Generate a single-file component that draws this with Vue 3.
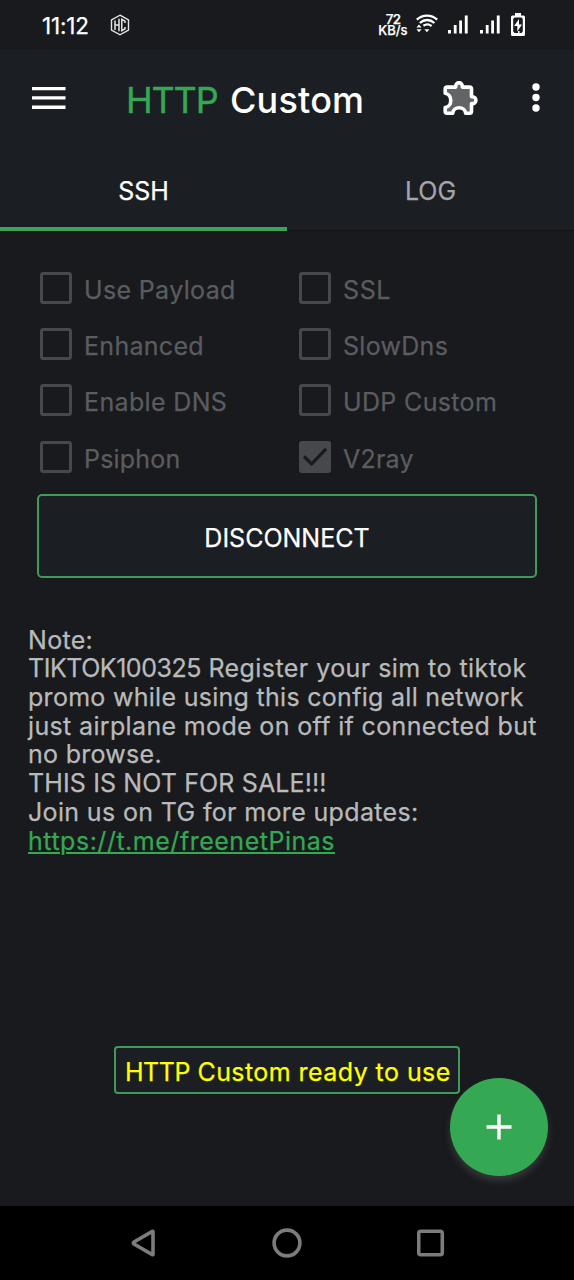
<script setup>
const options = [
  { label: 'Use Payload', checked: false, fit: 'wide' },
  { label: 'SSL', checked: false, fit: 'widest' },
  { label: 'Enhanced', checked: false, fit: 'mid' },
  { label: 'SlowDns', checked: false, fit: 'mid' },
  { label: 'Enable DNS', checked: false, fit: 'wide' },
  { label: 'UDP Custom', checked: false, fit: 'wide' },
  { label: 'Psiphon', checked: false, fit: 'slim' },
  { label: 'V2ray', checked: true, fit: 'slim' },
]
const noteLines = [
  [{ text: 'Note:', fit: 'mid' }],
  [{ text: 'TIKTOK100325', fit: 'tight' }, { text: ' Register your sim to tiktok', fit: 'wider' }],
  [{ text: 'promo while using this config all network', fit: 'mid' }],
  [{ text: 'just airplane mode on off if connected but', fit: 'wide' }],
  [{ text: 'no browse.', fit: 'mid' }],
  [{ text: 'THIS IS NOT FOR SALE!!!', fit: 'caps' }],
  [{ text: 'Join us on TG for more updates:', fit: 'wide' }],
]
</script>

<template>
  <div class="screen">
    <div class="status">
      <span class="clock">11:12</span>
      <svg class="hc" width="20" height="22" viewBox="0 0 20 22" fill="none" stroke="#e4e5e6">
        <path d="M10 1.2 18.5 6v10L10 20.8 1.5 16V6z" stroke-width="1.4" />
        <path d="M5 6.4v9.6M9 4.8v12.4M5 11h4M15 9V7.2l-3.2-1.8v11.2L15 14.8V13" stroke-width="1.5" />
      </svg>
      <div class="speed"><span class="rate">72</span><span>KB/s</span></div>
      <svg class="wifi" width="22" height="20" viewBox="0 0 22 20" fill="none" stroke="#fff" stroke-width="2.3">
        <path d="M.8 5.6C6.8.2 15.2.2 21.200 5.600M3.800 9C8.200 5 14 5 18.400 9M7.400 11.800C10 9.900 13.200 10.100 15.600 12.100" />
        <path d="M8.400 15.200h5L10.900 18.200z" fill="#fff" stroke="none" />
        <path d="M.4 13.600h5.200L3 10.600zM.4 15.200h5.200L3 18.200z" fill="#fff" stroke="none" />
      </svg>
      <svg v-for="n in 2" :key="n" class="signal" width="20" height="19" viewBox="0 0 20 19" fill="#fff">
        <path d="M0 15h3v3.500H0zM5.800 10h2.800v8.500H5.800zM11.200 5.500H14v13h-2.800zM16.800.5h2.900v18h-2.900z" />
      </svg>
      <svg class="battery" width="14" height="23" viewBox="0 0 14 23">
        <path d="M4 0h6v2.500h2.500Q14 2.500 14 4v17.500q0 1.500-1.500 1.500h-11Q0 23 0 21.500V4Q0 2.500 1.500 2.500H4z" fill="#fff" />
        <path d="M2.200 6 3.500 4.500h7L11.800 6v12.500L10.500 20H8.500v-2H7v2H3.500L2.200 18.500z" fill="#181a1d" />
        <path d="M8 6 3.100 13h3.200v5.500L11 11.500H8z" fill="#fff" />
      </svg>
    </div>

    <header class="toolbar">
      <svg class="menu" width="34" height="24" viewBox="0 0 34 24" fill="#fff">
        <path d="M0 1h33.500v3.300H0zM0 10.300h33.500v3.300H0zM0 19.600h33.500v3.300H0z" />
      </svg>
      <h1><span class="http">HTTP</span><span class="custom">Custom</span></h1>
      <svg class="puzzle" width="36" height="36" viewBox="0 0 36 36">
        <path
          d="M4 6.100H12.700V5a3.300 3.300 0 0 1 6.600 0V6.100H26.500Q28.500 6.100 28.500 8.100V15.800H29.500a3.400 3.400 0 0 1 0 6.800H28.500V30.500Q28.500 32.300 26.500 32.300H22.700C22 24.900 10.300 24.900 9.700 32.300H4Q2.200 32.300 2.200 30.300V26.600C9.600 25.500 9.600 13.500 2.200 12.200V8.100Q2.200 6.100 4 6.100Z"
          fill="#626466" stroke="#fff" stroke-width="3.600" stroke-linejoin="round"
        />
        <path d="M16 4.500v5M27 19.200h4" stroke="#626466" stroke-width="2" />
      </svg>
      <svg class="more" width="8" height="30" viewBox="0 0 8 30" fill="#fff">
        <circle cx="4" cy="4" r="3.700" /><circle cx="4" cy="14.500" r="3.700" /><circle cx="4" cy="25" r="3.700" />
      </svg>
    </header>

    <nav class="tabs">
      <div class="tab active"><span>SSH</span></div>
      <div class="tab"><span>LOG</span></div>
    </nav>

    <main>
      <div class="options">
        <div v-for="o in options" :key="o.label" class="option">
          <svg width="32" height="32" viewBox="0 0 32 32">
            <rect v-if="!o.checked" x="1.500" y="1.500" width="29" height="29" rx="1.800" fill="none" stroke="#47484b" stroke-width="3" />
            <template v-else>
              <rect width="32" height="32" rx="3" fill="#47484b" />
              <path d="M5 15.500 12.700 23 27 7.800" fill="none" stroke="#181a1d" stroke-width="3.200" />
            </template>
          </svg>
          <span :class="o.fit">{{ o.label }}</span>
        </div>
      </div>
      <button class="disconnect"><span>DISCONNECT</span></button>
      <div class="note">
        <div v-for="(line, i) in noteLines" :key="i" class="line"><span v-for="part in line" :key="part.text" :class="part.fit">{{ part.text }}</span></div>
        <div class="line"><a class="link">https://t.me/freenetPinas</a></div>
      </div>
      <div class="ready"><span class="tight">HTTP</span><span class="wider"> Custom ready to use</span></div>
      <div class="fab">
        <svg width="26" height="26" viewBox="0 0 26 26"><path d="M13 .5v25M.5 13h25" stroke="#fff" stroke-width="3.400" /></svg>
      </div>
    </main>

    <footer>
      <svg width="28" height="30" viewBox="0 0 28 30"><path d="M24 3.600V26.400Q24 27 23.300 26.600L5 16Q3.600 15 5 14L23.300 3.400Q24 3 24 3.600Z" /></svg>
      <svg width="30" height="30" viewBox="0 0 30 30"><circle cx="15" cy="15" r="12.900" /></svg>
      <svg width="28" height="30" viewBox="0 0 28 30"><rect x="1.700" y="3.200" width="23.600" height="23.600" rx="2" /></svg>
    </footer>
  </div>
</template>

<style>
html, body { background: #181a1d; }
</style>

<style scoped>
.screen {
  width: 574px; height: 1280px; overflow: hidden;
  display: flex; flex-direction: column;
  background: #181a1d; color: #fff;
  font-family: Inter, Roboto, sans-serif; font-weight: 400;
  -webkit-text-stroke-width: 0.250px;
}
span, a { white-space: pre; }
svg { display: block; flex: none; }
.tight { letter-spacing: -0.470px; }
.caps { letter-spacing: 0.130px; }
.slim { letter-spacing: 0.200px; }
.mid { letter-spacing: 0.290px; }
.wide { letter-spacing: 0.350px; }
.wider { letter-spacing: 0.440px; }
.widest { letter-spacing: 0.600px; }

.status { height: 50px; flex: none; display: flex; align-items: flex-start; padding-left: 42px; }
.clock { width: 68px; font-size: 22.500px; line-height: 52px; letter-spacing: -0.150px; }
.hc { margin-top: 14px; }
.speed {
  width: 30px; margin-left: 248px; margin-top: 14px;
  display: flex; flex-direction: column; align-items: center;
  font-size: 13px; line-height: 11px; font-weight: 500;
}
.rate { font-size: 13.500px; letter-spacing: -0.700px; }
.wifi { margin: 14px 0 0 8px; }
.signal { margin: 14.500px 0 0 12px; }
.wifi + .signal { margin-left: 10px; }
.battery { margin: 13px 0 0 11px; }

.toolbar { height: 100px; flex: none; display: flex; align-items: center; padding: 0 34px 0 32px; background: #1b1e22; }
.menu { margin-bottom: 4px; }
h1 { margin: 0 0 0 60px; width: 251px; font-size: 36px; line-height: 44px; font-weight: 400; display: flex; }
.http { color: #34a853; width: 104px; letter-spacing: -1.200px; -webkit-text-stroke-width: 0.400px; }
.custom { font-weight: 500; letter-spacing: 0.200px; -webkit-text-stroke-width: 0; }
.puzzle { margin: 0 0 3px 66px; }
.more { margin: 0 0 4px 53px; }

.tabs { height: 81px; flex: none; display: flex; background: #1b1e22; border-bottom: 1px solid #121417; box-sizing: border-box; }
.tab { flex: 1; height: 81px; box-sizing: border-box; padding-top: 25px; text-align: center; font-size: 25px; line-height: 32px; color: #a4a5a7; }
.tab.active { color: #fff; border-bottom: 4px solid #3ba458; }

main { flex: 1; position: relative; }
.options { display: grid; grid-template-columns: 259px 1fr; grid-auto-rows: 56.300px; padding: 28.700px 0 0 40px; }
.option { display: flex; align-items: center; gap: 12px; font-size: 25px; line-height: 30px; color: #5b5c5f; }
.option span { margin-top: 4px; }
.disconnect {
  display: flex; align-items: center; justify-content: center;
  width: 500px; height: 84px; margin: 8.800px 0 0 37px; padding: 4px 0 0;
  background: #1b1e22; border: 2px solid #419a5c; border-radius: 5px;
  color: #fff; font: 400 25px Inter, Roboto, sans-serif;
}
.note { margin: 48px 0 0 28px; font-size: 25px; line-height: 28.700px; color: #b9babb; }
.line { display: flex; }
.link { color: #34a853; letter-spacing: 0.520px; text-decoration: underline; text-decoration-thickness: 2px; text-underline-offset: 2px; }
.ready {
  position: absolute; left: 114px; top: 815px; width: 346px; height: 48px; box-sizing: border-box;
  display: flex; align-items: center; padding: 3px 0 0 9px;
  border: 2px solid #419a5c; border-radius: 4px; background: #1b1e22;
  color: #ff0; font-size: 25px;
}
.fab {
  position: absolute; left: 450px; top: 847px; width: 98px; height: 98px; border-radius: 50%;
  display: flex; align-items: center; justify-content: center; background: #34a853;
  box-shadow: 0 5px 7px rgba(100, 100, 100, 0.4);
}
footer { height: 74px; flex: none; display: flex; align-items: center; justify-content: center; gap: 115px; background: #000; }
footer svg { fill: none; stroke: #7c7c7c; stroke-width: 3.600px; }
</style>
